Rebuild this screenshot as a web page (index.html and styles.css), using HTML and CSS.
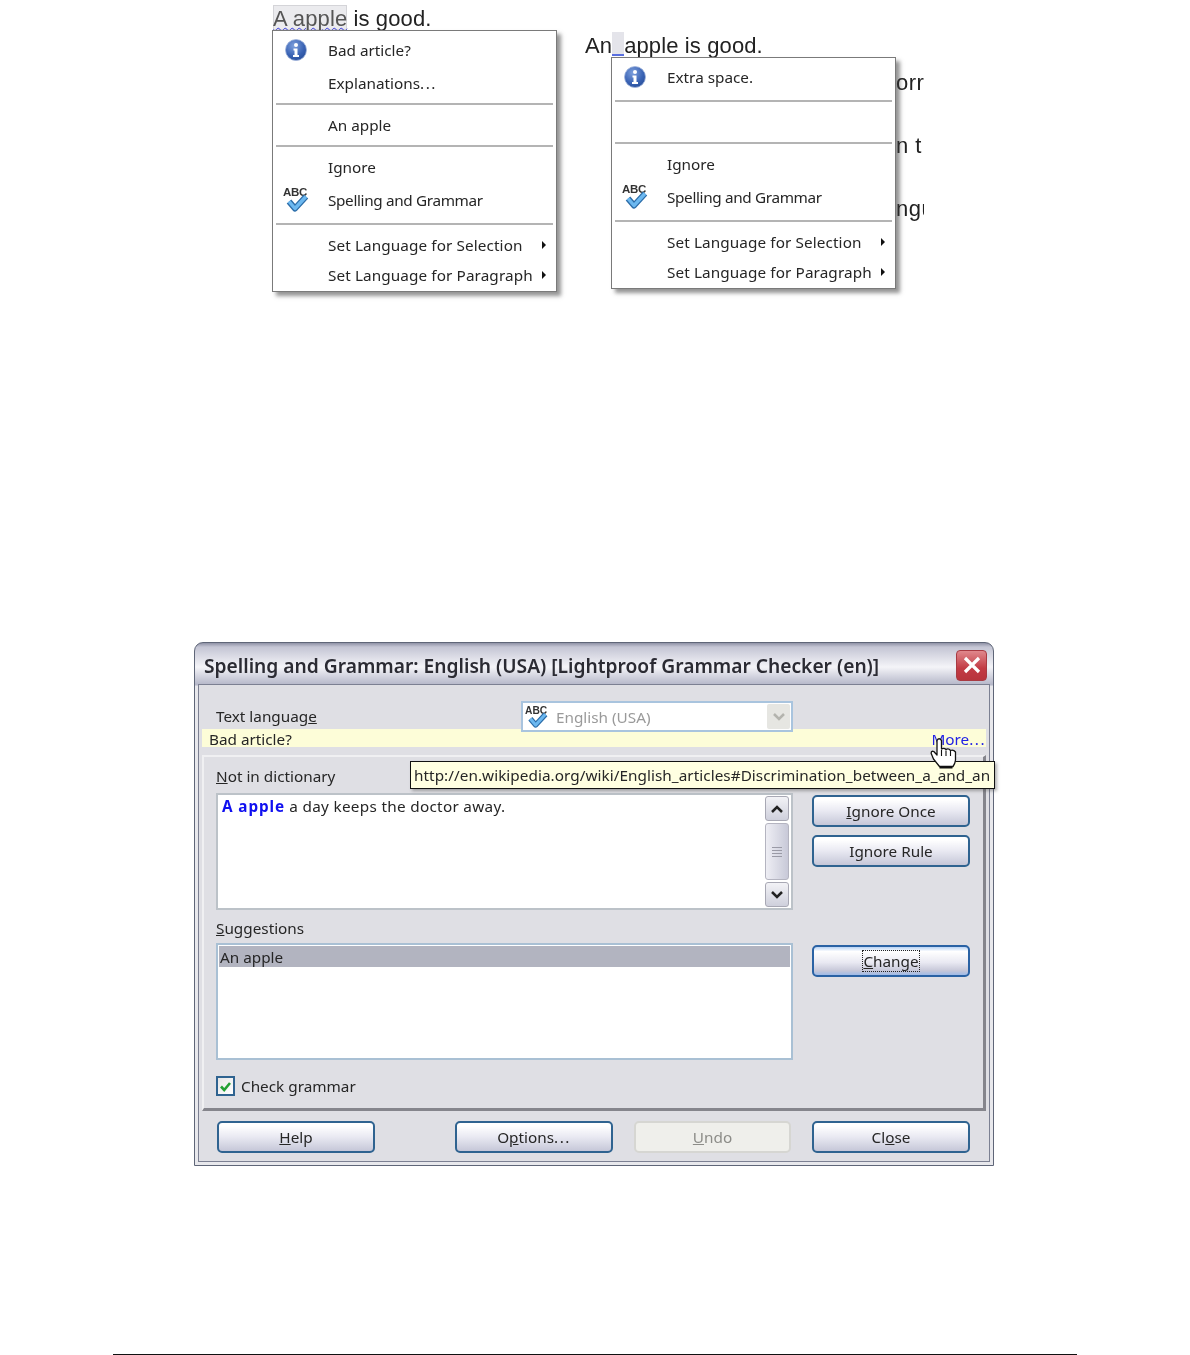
FILE: index.html
```html
<!DOCTYPE html>
<html lang="en">
<head>
  <meta charset="UTF-8" />
  <meta name="viewport" content="width=device-width, initial-scale=1.0" />
  <title>Spelling and Grammar</title>
  <link rel="stylesheet" href="styles.css">
</head>
<body>
  <svg class="defs" width="0" height="0">
    <defs>
      <radialGradient id="infoFill" cx="40%" cy="30%" r="80%">
        <stop offset="0" stop-color="#7d9fdc" />
        <stop offset="0.6" stop-color="#3a63b4" />
        <stop offset="1" stop-color="#234a94" />
      </radialGradient>
      <symbol id="icon-info" viewBox="0 0 22 22">
        <circle cx="11" cy="11" r="10.5" fill="url(#infoFill)" stroke="#9fb4dc" stroke-width="0.8" />
        <circle cx="11" cy="6" r="2" fill="#fff" />
        <path d="M8.5 9.5h4v6.5h1.5v2h-6v-2h1.5v-4.500h-1z" fill="#fff" />
      </symbol>
      <symbol id="icon-abc" viewBox="0 0 27 27">
        <text x="0" y="10" class="abc-text">ABC</text>
        <path d="M6 15.500l6 7 11-12" fill="none" stroke="#2b6ca8" stroke-width="6" stroke-linejoin="round" />
        <path d="M6 15.500l6 7 11-12" fill="none" stroke="#6cb8f0" stroke-width="3.400" stroke-linejoin="round" />
      </symbol>
    </defs>
  </svg>

  <div class="figures">
    <div class="figure">
      <p class="sentence"><span class="flagged">A apple</span> is good.</p>
      <div class="menu">
        <div class="menu-item">
          <svg class="menu-icon"><use href="#icon-info" /></svg>Bad article?
        </div>
        <div class="menu-item">Explanations<span class="dots">...</span></div>
        <hr class="menu-sep">
        <div class="menu-item menu-item-mid">An apple</div>
        <hr class="menu-sep">
        <div class="menu-item menu-item-low">Ignore</div>
        <div class="menu-item menu-item-tight">
          <svg class="menu-icon menu-icon-abc"><use href="#icon-abc" /></svg>Spelling and Grammar
        </div>
        <hr class="menu-sep menu-sep-wide">
        <div class="menu-item menu-item-sub">Set Language for Selection<i class="arrow"></i></div>
        <div class="menu-item menu-item-sub">Set Language for Paragraph<i class="arrow"></i></div>
      </div>
    </div>

    <div class="figure figure-right">
      <p class="sentence">An<span class="flagged-space"></span>apple is good.</p>
      <div class="menu-wrap">
        <div class="behind">
          <span class="behind-a">orr</span>
          <span class="behind-b">n t</span>
          <span class="behind-c">ngu</span>
        </div>
        <div class="menu">
          <div class="menu-item">
            <svg class="menu-icon"><use href="#icon-info" /></svg>Extra space.
          </div>
          <hr class="menu-sep menu-sep-first">
          <div class="menu-item menu-item-mid"></div>
          <hr class="menu-sep">
          <div class="menu-item menu-item-low">Ignore</div>
          <div class="menu-item menu-item-tight">
            <svg class="menu-icon menu-icon-abc"><use href="#icon-abc" /></svg>Spelling and Grammar
          </div>
          <hr class="menu-sep menu-sep-wide">
          <div class="menu-item menu-item-sub">Set Language for Selection<i class="arrow"></i></div>
          <div class="menu-item menu-item-sub">Set Language for Paragraph<i class="arrow"></i></div>
        </div>
      </div>
    </div>
  </div>

  <div class="dialog">
    <div class="titlebar">
      <span class="title">Spelling and Grammar: English (USA) [Lightproof Grammar Checker (en)]</span>
      <div class="close">
        <svg width="20" height="20" viewBox="0 0 20 20"><path d="M3 3l14 14M17 3L3 17" stroke="#fff" stroke-width="3.200" /></svg>
      </div>
    </div>

    <div class="dialog-body">
      <div class="lang-row">
        <span class="lang-label">Text languag<u>e</u></span>
        <div class="select">
          <svg class="select-icon"><use href="#icon-abc" /></svg>
          <span class="select-text">English (USA)</span>
          <div class="select-btn">
            <svg width="14" height="10" viewBox="0 0 14 10"><path d="M2 2l5 5 5-5" fill="none" stroke="#b4b4ae" stroke-width="2.500" /></svg>
          </div>
        </div>
      </div>

      <div class="error-band">
        <span>Bad article?</span>
        <span class="more">More<span class="dots">...</span></span>
      </div>

      <div class="panel">
        <div class="panel-row">
          <div class="field">
            <div class="field-label"><u>N</u>ot in dictionary</div>
            <div class="textbox">
              <div class="textbox-text"><b>A apple</b> a day keeps the doctor away.</div>
              <div class="scrollbar">
                <div class="scroll-btn">
                  <svg width="14" height="10" viewBox="0 0 14 10"><path d="M2 8l5-5 5 5" fill="none" stroke="#222" stroke-width="2.500" /></svg>
                </div>
                <div class="scroll-thumb"><i class="grip"></i></div>
                <div class="scroll-btn">
                  <svg width="14" height="10" viewBox="0 0 14 10"><path d="M2 2l5 5 5-5" fill="none" stroke="#222" stroke-width="2.500" /></svg>
                </div>
              </div>
            </div>
          </div>
          <div class="actions actions-top">
            <div class="btn"><span><u>I</u>gnore Once</span></div>
            <div class="btn"><span>I<u>g</u>nore Rule</span></div>
          </div>
        </div>

        <div class="panel-row panel-row-low">
          <div class="field">
            <div class="field-label"><u>S</u>uggestions</div>
            <div class="listbox">
              <div class="list-row">An apple</div>
            </div>
          </div>
          <div class="actions actions-change">
            <div class="btn btn-focus"><span class="focus-box"><u>C</u>hange</span></div>
          </div>
        </div>

        <div class="check-row">
          <div class="checkbox">
            <svg width="15" height="15" viewBox="0 0 15 15"><path d="M3 7.500l3.200 3.500L12 4" fill="none" stroke="#22a032" stroke-width="2.600" /></svg>
          </div>
          <span>Check <u>g</u>rammar</span>
        </div>
      </div>

      <div class="footer">
        <div class="btn btn-help"><span><u>H</u>elp</span></div>
        <div class="btn"><span>O<u>p</u>tions<span class="dots">...</span></span></div>
        <div class="btn btn-disabled"><span><u>U</u>ndo</span></div>
        <div class="btn"><span>Cl<u>o</u>se</span></div>
      </div>
    </div>

    <div class="tooltip">http://en.wikipedia.org/wiki/English_articles#Discrimination_between_a_and_an</div>
    <svg class="hand" width="28" height="33" viewBox="0 0 28 33">
      <path d="M7 3.500Q9 0 11.500 3.500V12Q14 10.500 16 12.500Q18.500 11 20.500 13.500Q23.500 12.500 25.500 15V23Q25 27 23 29.500H9.500Q7.500 27 3.500 22L1.200 16.500Q1 13.500 3.800 14.500L7 18Z" fill="#fff" stroke="#111" stroke-width="1.300" stroke-linejoin="round" />
      <path d="M11.500 13v6M16 13.500v5.500M20.500 14v5" fill="none" stroke="#111" stroke-width="1.100" />
      <path d="M9.500 30.500h13" stroke="#111" stroke-width="2" />
    </svg>
  </div>

  <div class="page-rule"></div>
</body>
</html>
```

FILE: styles.css
```css
:root {
  --ui-font: "Noto Sans", sans-serif;
  --btn-border: #2f6390;
  --dlg-bg: #dfdfe4;
  --text: #262626;
}

* {
  box-sizing: border-box;
}

body {
  margin: 0;
  background: #fff;
  color: var(--text);
  font-family: var(--ui-font);
  font-size: 15.3px;
}

.defs {
  display: block;
  height: 0;
}

.abc-text {
  font-family: "Liberation Sans", sans-serif;
  font-weight: bold;
  font-size: 11.500px;
  fill: #333;
}

.dots {
  letter-spacing: 1.500px;
}

/* top figures */
.figures {
  display: flex;
  padding-left: 272px;
  height: 291px;
  filter: blur(0.35px);
}

.figure {
  width: 339px;
}

.figure-right {
  padding-top: 27px;
  width: 312px;
}

.sentence {
  margin: 0;
  padding-top: 5px;
  height: 31px;
  font-family: "Liberation Sans", sans-serif;
  font-size: 22px;
  letter-spacing: 0.12px;
  line-height: 27px;
  white-space: nowrap;
  color: #222;
}

.figure-right .sentence {
  margin-left: -26px;
  height: 30px;
}

.flagged {
  display: inline-block;
  height: 25px;
  margin-left: 1px;
  background: #ebebee;
  box-shadow: inset 0 0 0 1px #d4d4d8;
  color: #555;
  text-decoration: underline wavy #3a3adf 1px;
  text-underline-offset: 1px;
}

.flagged-space {
  display: inline-block;
  width: 12px;
  height: 24px;
  vertical-align: top;
  background: #e4e4ea;
  border-bottom: 2px solid #5a6fe0;
}

.menu-wrap {
  position: relative;
}

.behind {
  position: absolute;
  left: 285px;
  top: 0;
  width: 28px;
  height: 170px;
  overflow: hidden;
  font-family: "Liberation Sans", sans-serif;
  font-size: 22px;
  letter-spacing: 0.5px;
  color: #222;
}

.behind span {
  position: absolute;
  left: 0;
  white-space: nowrap;
}

.behind-a { top: 13px; }
.behind-b { top: 76px; }
.behind-c { top: 139px; }

.menu {
  position: relative;
  width: 285px;
  margin-top: -1px;
  padding: 3px 3px 1px;
  background: #fff;
  border: 1px solid #7a7a7a;
  box-shadow: 4px 4px 4px rgba(60, 60, 60, 0.55);
  color: var(--text);
}

.menu-wrap .menu {
  margin-top: 0;
  width: 285px;
}

.menu-item {
  position: relative;
  height: 33px;
  padding-left: 52px;
  line-height: 33px;
  white-space: nowrap;
}

.menu-item-tight {
  letter-spacing: -0.35px;
}

.menu-item-mid {
  margin-top: 4px;
}

.menu-item-low {
  margin-top: 4px;
}

.menu-item-sub {
  height: 30px;
  line-height: 30px;
  letter-spacing: 0.1px;
}

.menu-sep {
  height: 2px;
  margin: 3px 0 0;
  border: none;
  background: #b4b4b4;
}

.menu-sep-first {
  margin-top: 6px;
}

.menu-sep-wide {
  margin-top: 6px;
  margin-bottom: 5px;
}

.menu-icon {
  position: absolute;
  left: 9px;
  top: 5px;
  width: 22px;
  height: 22px;
}

.menu-icon-abc {
  left: 7px;
  top: 2px;
  width: 27px;
  height: 27px;
}

.arrow {
  position: absolute;
  left: 266px;
  top: 50%;
  margin-top: -4px;
  border-left: 4px solid #111;
  border-top: 4px solid transparent;
  border-bottom: 4px solid transparent;
}

/* dialog */
.dialog {
  position: relative;
  width: 800px;
  height: 524px;
  margin: 351px 0 0 194px;
  padding: 0 3px 2px;
  background: linear-gradient(#8f92a6 0, #c4c5d4 4px, #f4f4f8 24px, #b4b6c8 42px, #e8e8ec 43px);
  border: 1px solid #5f6678;
  border-radius: 9px 9px 0 0;
  filter: blur(0.35px);
}

.titlebar {
  display: flex;
  align-items: center;
  justify-content: space-between;
  height: 41px;
  padding: 0 3px 0 6px;
}

.title {
  padding-top: 4px;
  font-size: 19.2px;
  font-weight: 600;
  color: #2b2b33;
  white-space: nowrap;
}

.close {
  display: flex;
  align-items: center;
  justify-content: center;
  width: 31px;
  height: 31px;
  margin-top: 3px;
  background: linear-gradient(#e0888c, #c23b44 60%, #b8343c);
  border: 1px solid #a83a42;
  border-radius: 4px;
}

.dialog-body {
  height: 478px;
  background: var(--dlg-bg);
  border: 1px solid #7c8092;
}

.lang-row {
  display: flex;
  align-items: flex-end;
  padding: 16px 0 0 17px;
}

.lang-label {
  width: 305px;
  line-height: 20px;
  padding-bottom: 6px;
}

.select {
  position: relative;
  display: flex;
  align-items: center;
  width: 272px;
  height: 31px;
  background: #fff;
  border: 2px solid #a9c4de;
  color: #9a9a9a;
}

.select-icon {
  width: 24px;
  height: 24px;
  margin: 0 7px 0 2px;
}

.select-text {
  flex: 1;
}

.select-btn {
  display: flex;
  align-items: center;
  justify-content: center;
  width: 23px;
  height: 25px;
  margin-right: 1px;
  background: #e6e6e2;
  border-radius: 2px;
}

.error-band {
  display: flex;
  justify-content: space-between;
  height: 18px;
  margin: -3px 3px 0;
  padding-left: 7px;
  background: #fdfdd8;
  line-height: 20px;
}

.more {
  color: #2222e6;
}

.panel {
  height: 356px;
  margin: 8px 3px 0;
  padding: 9px 0 0 12px;
  border-style: solid;
  border-width: 2px 3px 3px 2px;
  border-color: #f0f0f2 #85858c #85858c #f0f0f2;
}

.panel-row {
  display: flex;
  gap: 19px;
}

.panel-row-low {
  margin-top: 8px;
}

.field {
  width: 577px;
}

.field-label {
  height: 20px;
  line-height: 20px;
}

.textbox {
  display: flex;
  height: 117px;
  margin-top: 7px;
  padding: 1px 2px 1px 0;
  background: #fff;
  border: 2px solid #bcc2c8;
}

.textbox-text {
  flex: 1;
  padding: 0 0 0 4px;
  letter-spacing: 0.3px;
  line-height: 20px;
}

.textbox-text b {
  color: #1010f0;
  letter-spacing: 0.9px;
}

.scrollbar {
  display: flex;
  flex-direction: column;
  gap: 2px;
  width: 24px;
}

.scroll-btn {
  display: flex;
  align-items: center;
  justify-content: center;
  height: 25px;
  background: linear-gradient(#f2f2f6, #cfd0dc);
  border: 1px solid #a8a8b4;
  border-radius: 3px;
}

.scroll-thumb {
  display: flex;
  flex: 1;
  align-items: center;
  justify-content: center;
  background: linear-gradient(90deg, #eeeef4, #c8c9d8);
  border: 1px solid #b4b4c0;
  border-radius: 3px;
}

.grip {
  display: block;
  width: 10px;
  height: 10px;
  background: repeating-linear-gradient(#9a9aa6 0 1px, transparent 1px 3px);
}

.actions {
  display: flex;
  flex-direction: column;
  gap: 8px;
  width: 158px;
}

.actions-top {
  padding-top: 29px;
}

.actions-change {
  padding-top: 27px;
}

.listbox {
  height: 117px;
  margin-top: 5px;
  padding: 1px;
  background: #fff;
  border: 2px solid #a9c0d4;
}

.list-row {
  height: 21px;
  padding-left: 1px;
  background: #b2b4c0;
  line-height: 22px;
}

.check-row {
  display: flex;
  align-items: center;
  gap: 6px;
  margin-top: 16px;
  height: 20px;
}

.checkbox {
  display: flex;
  align-items: center;
  justify-content: center;
  width: 19px;
  height: 20px;
  background: linear-gradient(135deg, #e6e6e6, #fff);
  border: 2px solid #2f6390;
}

.btn {
  display: flex;
  align-items: center;
  justify-content: center;
  width: 158px;
  height: 32px;
  background: linear-gradient(#fff 10%, #e9e9f2 50%, #c6c7d8);
  border: 2px solid var(--btn-border);
  border-radius: 5px;
}

.btn-focus {
  background: linear-gradient(#b9d3f4, #fff 16%, #e9e9f2 55%, #c6c7d8 85%, #9fbbe8);
  border-color: #2a62a4;
}

.focus-box {
  outline: 1px dotted #222;
}

.btn-disabled {
  width: 157px;
  background: #efefeb;
  border-color: #d6d6d2;
  color: #8c8c88;
}

.footer {
  display: flex;
  gap: 21px;
  padding: 10px 0 0 18px;
}

.btn-help {
  margin-right: 59px;
}

.tooltip {
  position: absolute;
  left: 215px;
  top: 118px;
  width: 585px;
  height: 28px;
  padding-left: 3px;
  background: #ffffe1;
  border: 1px solid #111;
  box-shadow: 2px 2px 3px rgba(60, 60, 60, 0.4);
  line-height: 27px;
  letter-spacing: 0.05px;
  white-space: nowrap;
}

.hand {
  position: absolute;
  left: 735px;
  top: 94px;
}

.page-rule {
  height: 1px;
  margin: 188px 113px 0;
  background: #111;
}
```
